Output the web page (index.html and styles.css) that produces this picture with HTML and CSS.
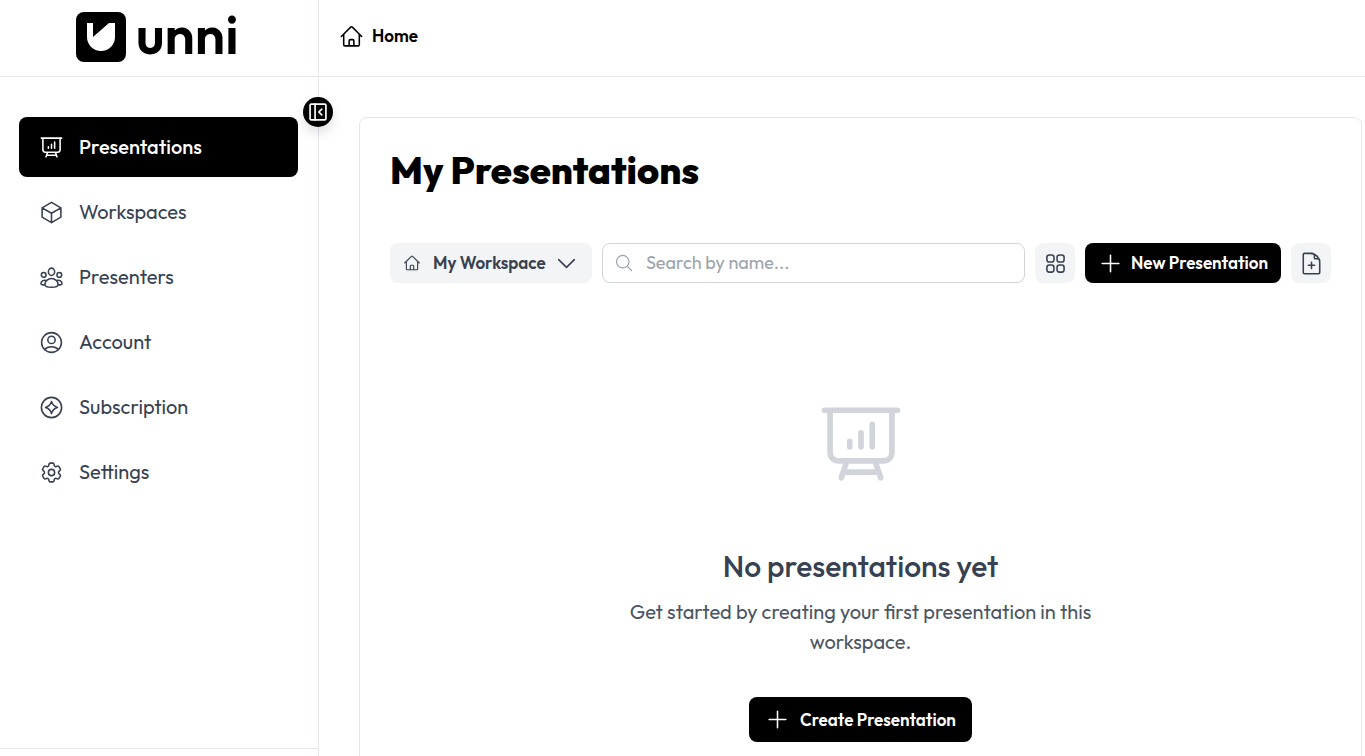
FILE: index.html
```html
<!DOCTYPE html>
<html lang="en">
<head>
<meta charset="utf-8">
<meta name="viewport" content="width=device-width, initial-scale=1">
<title>Unni - My Presentations</title>
<link rel="stylesheet" href="styles.css">
</head>
<body>
<svg class="sprite" aria-hidden="true">
  <symbol id="board" viewBox="0 0 24 24"><path d="M3.75 3v11.25A2.25 2.25 0 0 0 6 16.5h2.25M3.75 3h-1.5m1.5 0h16.5m0 0h1.5m-1.5 0v11.25A2.25 2.25 0 0 1 18 16.5h-2.25m-7.5 0h7.5m-7.5 0-1 3m8.5-3 1 3m0 0 .5 1.5m-.5-1.5h-9.5m0 0-.5 1.5M9 11.25v1.5M12 9v3.75m3-6v6"/></symbol>
  <symbol id="home" viewBox="0 0 24 24"><path d="m2.25 12 8.954-8.955c.44-.439 1.152-.439 1.591 0L21.75 12M4.5 9.75v10.125c0 .621.504 1.125 1.125 1.125H9.75v-4.875c0-.621.504-1.125 1.125-1.125h2.25c.621 0 1.125.504 1.125 1.125V21h4.125c.621 0 1.125-.504 1.125-1.125V9.75M8.25 21h8.25"/></symbol>
  <symbol id="cube" viewBox="0 0 24 24"><path d="m21 7.5-9-5.25L3 7.5m18 0-9 5.25m9-5.25v9l-9 5.25M3 7.5l9 5.25M3 7.5v9l9 5.25m0-9v9"/></symbol>
  <symbol id="group" viewBox="0 0 24 24"><ellipse cx="12" cy="6.500" rx="3" ry="3.500"/><circle cx="4.500" cy="9.500" r="2.250"/><circle cx="19.500" cy="9.500" r="2.250"/><path d="M12 13c-3.700 0-6.300 2.800-6.300 5.600 0 1.700 3.100 2.700 6.300 2.700s6.300-1 6.300-2.700c0-2.800-2.600-5.600-6.300-5.600ZM6.800 14.900c-2.700-.9-4.900.6-4.900 3.100 0 .9 1.800 1.200 3.800 1M17.200 14.900c2.700-.9 4.900.6 4.900 3.100 0 .9-1.800 1.200-3.800 1"/></symbol>
  <symbol id="user" viewBox="0 0 24 24"><circle cx="12" cy="12" r="9.5"/><circle cx="12" cy="9.500" r="3.500"/><path d="M5.500 18.800c1.500-2 4-2.800 6.500-2.800s5 .8 6.500 2.800"/></symbol>
  <symbol id="spark" viewBox="0 0 24 24"><circle cx="12" cy="12" r="9.7"/><path d="M12 6.300c1 3.400 2.300 4.700 5.700 5.700-3.400 1-4.700 2.300-5.700 5.700-1-3.400-2.300-4.700-5.700-5.700 3.400-1 4.700-2.300 5.700-5.700Z"/></symbol>
  <symbol id="cog" viewBox="0 0 24 24"><path d="M9.594 3.94c.09-.542.56-.94 1.11-.94h2.593c.55 0 1.02.398 1.11.94l.213 1.281c.063.374.313.686.645.87.074.04.147.083.22.127.325.196.72.257 1.075.124l1.217-.456a1.125 1.125 0 0 1 1.37.49l1.296 2.247a1.125 1.125 0 0 1-.26 1.431l-1.003.827c-.293.241-.438.613-.43.992a7.723 7.723 0 0 1 0 .255c-.008.378.137.75.43.991l1.004.827c.424.35.534.955.26 1.43l-1.298 2.247a1.125 1.125 0 0 1-1.369.491l-1.217-.456c-.355-.133-.75-.072-1.076.124a6.47 6.47 0 0 1-.22.128c-.331.183-.581.495-.644.869l-.213 1.281c-.09.543-.56.94-1.11.94h-2.594c-.55 0-1.019-.398-1.11-.94l-.213-1.281c-.062-.374-.312-.686-.644-.87a6.52 6.52 0 0 1-.22-.127c-.325-.196-.72-.257-1.076-.124l-1.217.456a1.125 1.125 0 0 1-1.369-.49l-1.297-2.247a1.125 1.125 0 0 1 .26-1.431l1.004-.827c.292-.24.437-.613.43-.991a6.932 6.932 0 0 1 0-.255c.007-.38-.138-.751-.43-.992l-1.004-.827a1.125 1.125 0 0 1-.26-1.43l1.297-2.247a1.125 1.125 0 0 1 1.37-.491l1.216.456c.356.133.751.072 1.076-.124.072-.044.146-.086.22-.128.332-.183.582-.495.644-.869l.214-1.28Z"/><circle cx="12" cy="12" r="3"/></symbol>
  <symbol id="chevron" viewBox="0 0 24 24"><path d="m19.500 8.250-7.500 7.500-7.500-7.500"/></symbol>
  <symbol id="search" viewBox="0 0 24 24"><path d="m21 21-5.197-5.197m0 0A7.500 7.500 0 1 0 5.196 5.196a7.500 7.500 0 0 0 10.607 10.607Z"/></symbol>
  <symbol id="grid" viewBox="0 0 24 24"><rect x="3.750" y="3.750" width="6.750" height="6.750" rx="2.200"/><rect x="13.500" y="3.750" width="6.750" height="6.750" rx="2.200"/><rect x="3.750" y="13.500" width="6.750" height="6.750" rx="2.200"/><rect x="13.500" y="13.500" width="6.750" height="6.750" rx="2.200"/></symbol>
  <symbol id="plus" viewBox="0 0 24 24"><path d="M12 4v16m8-8H4"/></symbol>
  <symbol id="doc" viewBox="0 0 24 24"><path d="M11 2.250H5.200A1.100 1.100 0 0 0 4.100 3.350v17.300a1.100 1.100 0 0 0 1.100 1.100h13.600a1.100 1.100 0 0 0 1.100-1.100V11.250a9 9 0 0 0-9-9Zm0 0h1.500a2.250 2.250 0 0 1 2.250 2.250V6.400c0 .6.500 1.100 1.100 1.100h1.800a2.250 2.250 0 0 1 2.250 2.250M12 10.750v6m3-3H9"/></symbol>
  <symbol id="collapse" viewBox="0 0 24 24"><rect x="2.500" y="2.500" width="19" height="19" rx="1.500"/><path d="M8.500 2.500v19M16.500 8.500 13 12l3.500 3.500"/></symbol>
</svg>
<div class="app">
  <aside class="sidebar">
    <a class="brand" href="#" aria-label="Unni">
      <svg class="brand-mark" viewBox="0 0 50 50" aria-hidden="true"><rect width="50" height="50" rx="8"/><path class="brand-shape" d="M11 11h6v14L33 11h6v14a14 14 0 0 1-28 0Z"/></svg>
      <span class="brand-name">unni</span>
    </a>
    <nav class="nav" aria-label="Main">
      <a class="nav-item active" href="#" aria-current="page"><svg class="icon"><use href="#board"/></svg>Presentations</a>
      <a class="nav-item" href="#"><svg class="icon"><use href="#cube"/></svg>Workspaces</a>
      <a class="nav-item" href="#"><svg class="icon"><use href="#group"/></svg>Presenters</a>
      <a class="nav-item" href="#"><svg class="icon"><use href="#user"/></svg>Account</a>
      <a class="nav-item" href="#"><svg class="icon"><use href="#spark"/></svg>Subscription</a>
      <a class="nav-item" href="#"><svg class="icon"><use href="#cog"/></svg>Settings</a>
    </nav>
    <div class="sidebar-foot"></div>
    <button class="collapse" type="button" aria-label="Collapse sidebar"><svg class="icon small bold"><use href="#collapse"/></svg></button>
  </aside>
  <div class="page">
    <header class="topbar"><a class="crumb" href="#"><svg class="icon"><use href="#home"/></svg>Home</a></header>
    <main class="main">
      <section class="card">
        <h1 class="title">My Presentations</h1>
        <div class="toolbar">
          <button class="btn soft workspace" type="button"><svg class="icon tiny"><use href="#home"/></svg><span class="label">My Workspace</span><svg class="icon"><use href="#chevron"/></svg></button>
          <label class="search"><svg class="icon small"><use href="#search"/></svg><input type="text" placeholder="Search by name..." aria-label="Search by name"></label>
          <button class="btn soft square" type="button" aria-label="Grid view"><svg class="icon"><use href="#grid"/></svg></button>
          <button class="btn dark new" type="button"><svg class="icon"><use href="#plus"/></svg>New Presentation</button>
          <button class="btn soft square" type="button" aria-label="Import file"><svg class="icon"><use href="#doc"/></svg></button>
        </div>
        <div class="empty">
          <svg class="icon huge"><use href="#board"/></svg>
          <h2 class="empty-title">No presentations yet</h2>
          <p class="empty-text">Get started by creating your first presentation in this workspace.</p>
          <button class="btn dark create" type="button"><svg class="icon"><use href="#plus"/></svg>Create Presentation</button>
        </div>
      </section>
    </main>
  </div>
</div>
</body>
</html>
```
FILE: styles.css
```css
* { box-sizing: border-box; }
body {
  margin: 0;
  background: #fff;
  color: #374151;
  font: 20px/30px Outfit, Lato, "Liberation Sans", sans-serif;
}
a { color: inherit; text-decoration: none; }
button, input { font: inherit; }
.sprite { position: absolute; width: 0; height: 0; }
.icon {
  flex: none;
  width: 25px;
  height: 25px;
  fill: none;
  stroke: currentColor;
  stroke-width: 1.5;
  stroke-linecap: round;
  stroke-linejoin: round;
}
.icon.small { width: 20px; height: 20px; }
.icon.tiny { width: 18px; height: 18px; }
.icon.bold { stroke-width: 2; }
.icon.huge { width: 90px; height: 90px; color: #d1d5db; }

.app { display: flex; height: 100vh; overflow: hidden; }
.sidebar {
  position: relative;
  z-index: 1;
  display: flex;
  flex: none;
  flex-direction: column;
  width: 319px;
  border-right: 1px solid #e5e7eb;
}
.brand {
  display: flex;
  align-items: center;
  gap: 10px;
  height: 77px;
  padding: 0 0 2px 76px;
  border-bottom: 1px solid #e5e7eb;
  color: #000;
}
.brand-mark { width: 50px; height: 50px; }
.brand-name { padding-bottom: 7px; font-size: 54px; font-weight: 600; line-height: 68px; }
.brand-shape { fill: #fff; }
.nav {
  display: flex;
  flex: 1;
  flex-direction: column;
  gap: 5px;
  padding: 40px 20px 0 19px;
}
.nav-item {
  display: flex;
  align-items: center;
  gap: 15px;
  height: 60px;
  padding: 0 20px;
  border-radius: 8px;
}
.nav-item.active { background: #000; color: #fff; font-weight: 500; }
.sidebar-foot { height: 8px; border-top: 1px solid #e5e7eb; }
.collapse {
  position: absolute;
  top: 97px;
  right: -15px;
  display: grid;
  place-items: center;
  width: 30px;
  height: 30px;
  padding: 0;
  border: 0;
  border-radius: 50%;
  background: #000;
  color: #fff;
  box-shadow: 0 6px 12px rgba(0, 0, 0, .12);
}

.page { display: flex; flex: 1; flex-direction: column; min-width: 0; }
.topbar {
  display: flex;
  flex: none;
  align-items: center;
  height: 77px;
  padding: 0 20px 4px;
  border-bottom: 1px solid #e5e7eb;
}
.crumb { display: flex; align-items: center; gap: 8px; color: #000; font-size: 17px; font-weight: 600; }
.main { flex: 1; padding: 40px 3px 0 40px; }
.card {
  min-height: 700px;
  padding: 30px;
  border: 1px solid #e5e7eb;
  border-radius: 8px;
}
.title { margin: 0; color: #000; font-size: 38px; font-weight: 800; line-height: 45px; }
.toolbar { display: flex; gap: 10px; margin-top: 50px; }
.btn {
  display: flex;
  flex: none;
  align-items: center;
  justify-content: center;
  height: 40px;
  padding: 0;
  border: 0;
  border-radius: 8px;
  font-size: 17px;
  font-weight: 600;
  white-space: nowrap;
}
.soft { background: #f3f4f6; color: #374151; }
.dark { gap: 8px; background: #000; color: #fff; }
.square { width: 40px; }
.workspace { width: 202px; padding: 0 13px; }
.label { flex: 1; padding-left: 12px; text-align: left; }
.new { width: 196px; }
.search {
  display: flex;
  flex: 1;
  align-items: center;
  gap: 12px;
  min-width: 0;
  height: 40px;
  padding: 0 11px;
  border: 1px solid #d1d5db;
  border-radius: 8px;
  color: #9ca3af;
}
.search input {
  flex: 1;
  min-width: 0;
  padding: 0;
  border: 0;
  outline: 0;
  background: none;
  color: #374151;
  font-size: 18px;
}
.search input::placeholder { color: #9ca3af; opacity: 1; }
.empty {
  display: flex;
  flex-direction: column;
  align-items: center;
  padding-top: 116px;
  text-align: center;
}
.empty-title { margin: 58px 0 0; font-size: 30px; font-weight: 500; line-height: 38px; }
.empty-text { max-width: 480px; margin: 12px 0 40px; color: #4b5563; }
.create { gap: 10px; width: 223px; height: 45px; }
```
